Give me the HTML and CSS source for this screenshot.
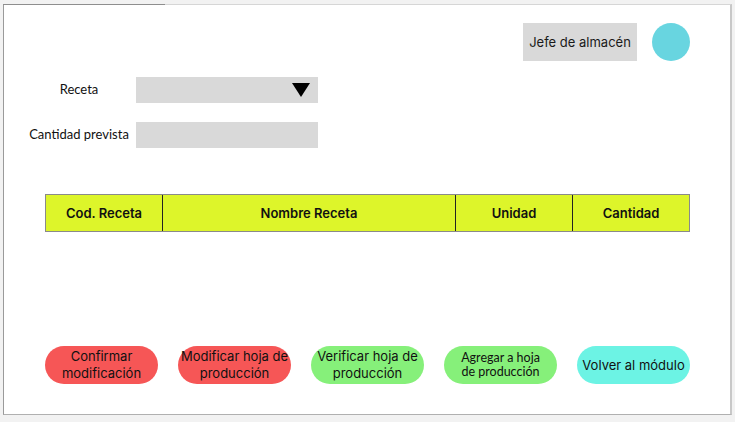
FILE: index.html
```html
<!DOCTYPE html>
<html lang="es">
<head>
<meta charset="utf-8">
<title>Hoja de producción</title>
<link rel="stylesheet" href="styles.css">
</head>
<body>
<div class="panel">
  <div class="topbar">
    <div class="user">Jefe de almacén</div>
    <div class="avatar"></div>
  </div>
  <div class="form">
    <div class="label">Receta</div>
    <div class="field select">
      <svg class="caret" width="18" height="14" viewBox="0 0 18 14"><polygon points="0,0 18,0 9,14" fill="#000"/></svg>
    </div>
    <div class="label">Cantidad prevista</div>
    <div class="field"></div>
  </div>
  <div class="table">
    <div class="th">Cod. Receta</div>
    <div class="th">Nombre Receta</div>
    <div class="th">Unidad</div>
    <div class="th">Cantidad</div>
  </div>
  <div class="actions">
    <div class="btn red">Confirmar<br>modificación</div>
    <div class="btn red tight">Modificar hoja de<br>producción</div>
    <div class="btn green">Verificar hoja de<br>producción</div>
    <div class="btn green geo">Agregar a hoja<br>de producción</div>
    <div class="btn cyan">Volver al módulo</div>
  </div>
</div>
</body>
</html>
```

FILE: styles.css
```css
html, body {
  margin: 0;
  padding: 0;
  background: #f2f2f2;
  width: 735px;
  height: 422px;
  overflow: hidden;
}

.panel {
  margin: 4px 0 0 3px;
  width: 729px;
  height: 411px;
  box-sizing: border-box;
  background: #ffffff;
  border-left: 1px solid #9a9a9a;
  border-bottom: 1px solid #b0b0b0;
  border-right: 2px solid #c8c8c8;
  border-top: 1px solid #d6d6d6;
  position: relative;
  font-family: "Inter", "Roboto", sans-serif;
  color: #111;
}

.panel::before {
  content: "";
  position: absolute;
  left: -1px;
  top: -1px;
  width: 162px;
  height: 1px;
  background: #8e8e8e;
}

.topbar {
  display: flex;
  justify-content: flex-end;
  align-items: center;
  gap: 15px;
  padding: 18px 40px 0 0;
}

.user {
  width: 114px;
  height: 38px;
  background: #d9d9d9;
  display: flex;
  align-items: center;
  justify-content: center;
  font-size: 13px;
  color: #1a1a1a;
}

.avatar {
  width: 38px;
  height: 38px;
  border-radius: 50%;
  background: #68d5e0;
}

.form {
  display: grid;
  grid-template-columns: 110px 182px;
  column-gap: 2px;
  row-gap: 19px;
  padding: 16px 0 0 20px;
  align-items: center;
}

.label {
  text-align: center;
  font-family: "Lato", "Noto Sans", sans-serif;
  font-size: 13px;
  color: #111;
  padding-bottom: 2px;
}

.field {
  height: 26px;
  background: #d9d9d9;
}

.select {
  display: flex;
  align-items: center;
  justify-content: flex-end;
  padding-right: 8px;
}

.caret {
  display: block;
}

.table {
  display: grid;
  grid-template-columns: 116px 293px 117px 117px;
  margin: 46px 0 0 41px;
  width: 645px;
  height: 38px;
  box-sizing: border-box;
  background: #ddf52a;
  border: 1px solid #8a8a8a;
}

.th {
  display: flex;
  align-items: center;
  justify-content: center;
  font-size: 13px;
  font-weight: 600;
  color: #111;
  border-left: 1px solid #222;
}

.th:first-child {
  border-left: none;
}

.actions {
  display: flex;
  gap: 20px;
  margin: 114px 0 0 41px;
}

.btn {
  width: 113px;
  height: 38px;
  border-radius: 19px;
  display: flex;
  align-items: center;
  justify-content: center;
  text-align: center;
  font-size: 13px;
  line-height: 17px;
  color: #111;
  white-space: nowrap;
}

.geo {
  font-family: "Lato", "Noto Sans", sans-serif;
  font-size: 12.5px;
  line-height: 14px;
}

.red { background: #f65656; }
.green { background: #86f07a; }
.cyan { background: #6cf3e4; }
```
